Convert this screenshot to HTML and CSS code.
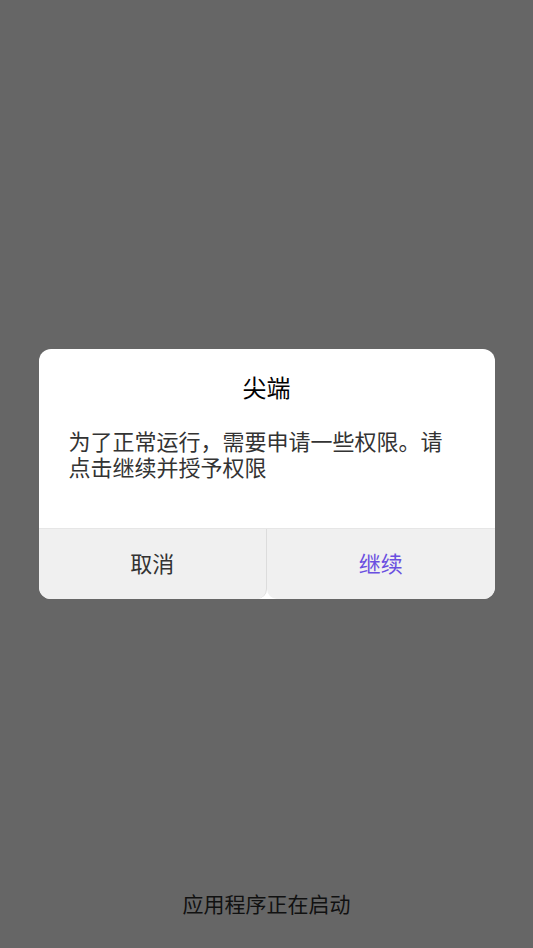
FILE: index.html
```html
<!DOCTYPE html>
<html lang="zh">
<head>
<meta charset="utf-8">
<link rel="stylesheet" href="styles.css">
</head>
<body>
<div class="screen">
  <div class="dialog">
    <div class="title">尖端</div>
    <div class="message">为了正常运行，需要申请一些权限。请点击继续并授予权限</div>
    <div class="actions">
      <div class="btn btn-cancel">取消</div>
      <div class="btn btn-ok">继续</div>
    </div>
  </div>
  <div class="status">应用程序正在启动</div>
</div>
</body>
</html>
```
FILE: styles.css
```css
html, body {
  margin: 0;
  padding: 0;
  background: #666666;
}
.screen {
  height: 948px;
  display: flex;
  flex-direction: column;
  align-items: center;
  font-family: "Noto Sans CJK SC", "Noto Sans", sans-serif;
}
.dialog {
  margin-top: 349px;
  width: 456px;
  background: #ffffff;
  border-radius: 12px;
  overflow: hidden;
  display: flex;
  flex-direction: column;
}
.title {
  padding-top: 23px;
  height: 30px;
  line-height: 30px;
  font-size: 24px;
  color: #000000;
  text-align: center;
}
.message {
  margin-top: 25px;
  padding: 0 36px 0 30px;
  font-size: 22px;
  line-height: 26px;
  color: #333333;
}
.actions {
  margin-top: 49px;
  height: 70px;
  display: flex;
  border-top: 1px solid #e6e6e6;
}
.btn {
  flex: 1;
  display: flex;
  align-items: center;
  justify-content: center;
  background: #f0f0f0;
  font-size: 22px;
  padding-bottom: 4px;
}
.btn-cancel {
  color: #333333;
  border-right: 1px solid #dcdcdc;
  border-bottom-right-radius: 10px;
}
.btn-ok {
  color: #6a4fe0;
  border-bottom-left-radius: 10px;
}
.status {
  margin-top: auto;
  margin-bottom: 30px;
  font-size: 21px;
  line-height: 30px;
  color: #111111;
}
```
